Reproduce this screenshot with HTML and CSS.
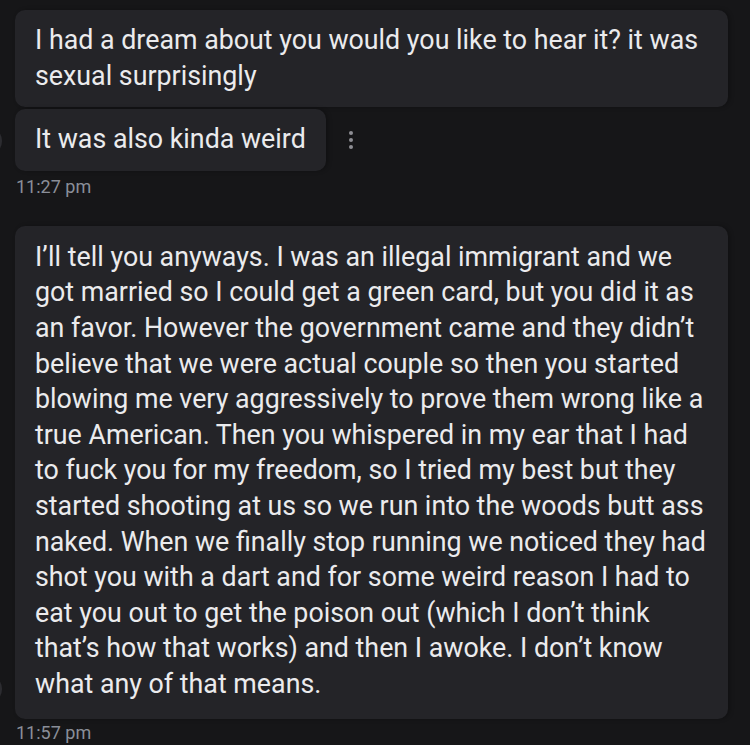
FILE: index.html
```html
<!DOCTYPE html>
<html>
<head>
<meta charset="utf-8">
<link rel="stylesheet" href="styles.css">
</head>
<body>
<div class="chat">
  <div class="group">
    <div class="row">
      <div class="avatar-space"></div>
      <div class="bubble wide">I had a dream about you would you like to hear it? it was<br>sexual surprisingly</div>
    </div>
    <div class="row">
      <div class="avatar"></div>
      <div class="bubble">It was also kinda weird</div>
      <div class="kebab"><span></span><span></span><span></span></div>
    </div>
    <div class="time">11:27 pm</div>
  </div>
  <div class="group second">
    <div class="row">
      <div class="avatar"></div>
      <div class="bubble wide long">I’ll tell you anyways. I was an illegal immigrant and we<br>got married so I could get a green card, but you did it as<br>an favor. However the government came and they didn’t<br>believe that we were actual couple so then you started<br>blowing me very aggressively to prove them wrong like a<br>true American. Then you whispered in my ear that I had<br>to fuck you for my freedom, so I tried my best but they<br>started shooting at us so we run into the woods butt ass<br>naked. When we finally stop running we noticed they had<br>shot you with a dart and for some weird reason I had to<br>eat you out to get the poison out (which I don’t think<br>that’s how that works) and then I awoke. I don’t know<br>what any of that means.</div>
    </div>
    <div class="time last">11:57 pm</div>
  </div>
</div>
</body>
</html>
```

FILE: styles.css
```css
html, body {
  margin: 0;
  padding: 0;
  background: #161618;
  height: 100%;
  overflow: hidden;
}
body {
  font-family: Roboto, "Liberation Sans", sans-serif;
  color: #ebebed;
}
.chat {
  padding: 10px 0 0 0;
  display: flex;
  flex-direction: column;
}
.group {
  display: flex;
  flex-direction: column;
  gap: 2px;
}
.group.second {
  margin-top: 28px;
}
.row {
  display: flex;
  align-items: flex-end;
}
.avatar-space {
  width: 15px;
  flex: none;
}
.avatar {
  width: 30px;
  height: 30px;
  margin-left: -28px;
  margin-right: 13px;
  margin-bottom: 15px;
  border-radius: 50%;
  background: #2c2c30;
  flex: none;
}
.bubble {
  background: #242428;
  border-radius: 10px;
  padding: 13px 20px 13px 20px;
  font-size: 26.8px;
  line-height: 35.6px;
  white-space: nowrap;
  box-shadow: 2px 0 4px rgba(0,0,0,0.25);
}
.bubble.wide {
  width: 673px;
}
.bubble.long {
  padding-top: 14px;
  padding-bottom: 16px;
}
.kebab {
  display: flex;
  flex-direction: column;
  gap: 3px;
  margin-left: 23px;
  align-self: center;
}
.kebab span {
  width: 4px;
  height: 4px;
  border-radius: 50%;
  background: #8e8e94;
}
.time {
  font-size: 18px;
  line-height: 22px;
  color: #8a8e98;
  margin-top: 3px;
  padding-left: 16px;
}
.time.last {
  margin-top: 1px;
}
```
